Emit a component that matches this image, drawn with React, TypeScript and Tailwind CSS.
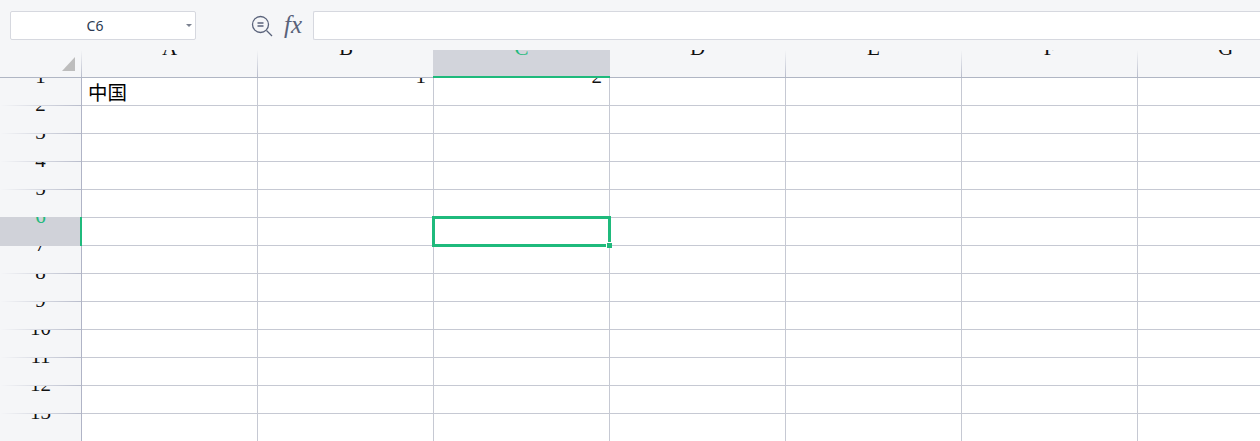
import React from "react";

const columns = ["A", "B", "C", "D", "E", "F", "G"];
const rows = [1, 2, 3, 4, 5, 6, 7, 8, 9, 10, 11, 12, 13, 14];

function ColumnHead({ label, active, beforeActive }: { label: string; active: boolean; beforeActive: boolean }) {
  if (active) {
    return (
      <div className="ml-[-1px] flex w-[177px] shrink-0">
        <div className="flex-1 overflow-hidden bg-[#d2d4db] text-center text-[#1fba7c]">
          <div className="mt-[-7px] text-[21px] leading-[10px]">{label}</div>
        </div>
      </div>
    );
  }
  return (
    <div className="flex w-[176px] shrink-0">
      <div className="flex-1 overflow-hidden text-center text-[#111111]">
        <div className="mt-[-7px] text-[21px] leading-[10px]">{label}</div>
      </div>
      {!beforeActive && <div className="w-px bg-linear-to-b from-[#f5f6f8] to-[#b9bdcc]" />}
    </div>
  );
}

function RowHead({ n, active, last }: { n: number; active: boolean; last: boolean }) {
  if (active) {
    return (
      <div className="mt-[-1px] h-[29px] w-[81px] shrink-0 overflow-hidden bg-[#d0d2d9] text-center text-[#1fba7c]">
        <div className="mt-[-6px] text-[21px] leading-[10px]">{n}</div>
      </div>
    );
  }
  return (
    <div className="flex h-[28px] w-[81px] shrink-0 flex-col">
      <div className="flex-1 overflow-hidden text-center text-[#111111]">
        <div className="mt-[-7px] text-[21px] leading-[10px]">{n}</div>
      </div>
      {!last && <div className="h-px bg-linear-to-r from-[#f5f6f8] to-[#b9bdcc]" />}
    </div>
  );
}

function Cell({ value }: { value?: string }) {
  return (
    <div className="h-[28px] w-[176px] shrink-0 overflow-hidden border-r border-b border-[#c6c9d3] pr-[7px] text-right text-[#111111]">
      {value && <div className="mt-[-7px] text-[21px] leading-[10px]">{value}</div>}
    </div>
  );
}

export default function App() {
  return (
    <div className="relative flex h-[441px] w-[1260px] flex-col overflow-hidden bg-white font-['Liberation_Serif','Noto_Sans_CJK_SC',serif]">
      <div className="flex h-[50px] shrink-0 items-start bg-[#f5f6f8] pt-[11px]">
        <div className="relative ml-[10px] flex h-[29px] w-[186px] items-center justify-center rounded-[2px] border border-[#d6d8df] bg-white font-['Noto_Sans',sans-serif] text-[14px] text-[#2b3a52]">
          <span className="mr-[16px]">C6</span>
          <span className="absolute right-[3px] top-[12px] h-0 w-0 border-x-[3px] border-t-[3px] border-x-transparent border-t-[#7b8190]" />
        </div>
        <svg className="ml-[55px] mt-[4px]" width="22" height="22" viewBox="0 0 22 22" fill="none" stroke="#59627a" strokeWidth="1.3">
          <circle cx="9.5" cy="9.5" r="8" />
          <path d="M15.5 15.5 21 21" />
          <path d="M6.5 8h6M6.5 11h6" />
        </svg>
        <span className="ml-[11px] mt-[1px] w-[18px] text-[25px] italic leading-[26px] text-[#59627a]">fx</span>
        <div className="ml-[11px] h-[29px] flex-1 rounded-l-[2px] border border-r-0 border-[#d6d8df] bg-white" />
      </div>

      <div className="flex h-[28px] shrink-0 flex-col bg-[#f5f6f8]">
        <div className="flex flex-1">
          <div className="relative flex w-[82px] shrink-0">
            <div className="flex-1" />
            <svg className="absolute left-[62px] top-[7px]" width="13" height="14" viewBox="0 0 13 14">
              <path d="M13 0V14H0Z" fill="#bdbdbd" />
            </svg>
            <div className="w-px bg-linear-to-b from-[#f5f6f8] to-[#b9bdcc]" />
          </div>
          {columns.map((c) => (
            <ColumnHead key={c} label={c} active={c === "C"} beforeActive={c === "B"} />
          ))}
        </div>
        <div className="h-px bg-[#b0b6c4]" />
      </div>

      <div className="flex min-h-0 flex-1">
        <div className="flex shrink-0 flex-col bg-[#f5f6f8]">
          {rows.map((n) => (
            <RowHead key={n} n={n} active={n === 6} last={n === 14} />
          ))}
        </div>
        <div className="w-px shrink-0 bg-[#b0b4c6]" />
        <div className="flex flex-col">
          {rows.map((n) => (
            <div key={n} className="flex">
              {columns.map((c) => (
                <Cell key={c} value={n === 1 ? (c === "B" ? "1" : c === "C" ? "2" : undefined) : undefined} />
              ))}
            </div>
          ))}
        </div>
      </div>

      <div className="absolute left-[88px] top-[80px] font-['Noto_Sans_CJK_SC',sans-serif] text-[19.5px] leading-[24px] text-black">中国</div>
      <div className="absolute left-[433px] top-[76px] h-[2px] w-[177px] bg-[#1fba7c]" />
      <div className="absolute left-[80px] top-[217px] h-[29px] w-[2px] bg-[#1fba7c]" />
      <div className="absolute left-[432px] top-[216px] h-[31px] w-[179px] border-[3px] border-[#1fba7c]" />
      <div className="absolute left-[606px] top-[242px] h-[6px] w-[6px] bg-white" />
      <div className="absolute left-[607px] top-[243px] h-[5px] w-[5px] bg-[#1fba7c]" />
    </div>
  );
}
